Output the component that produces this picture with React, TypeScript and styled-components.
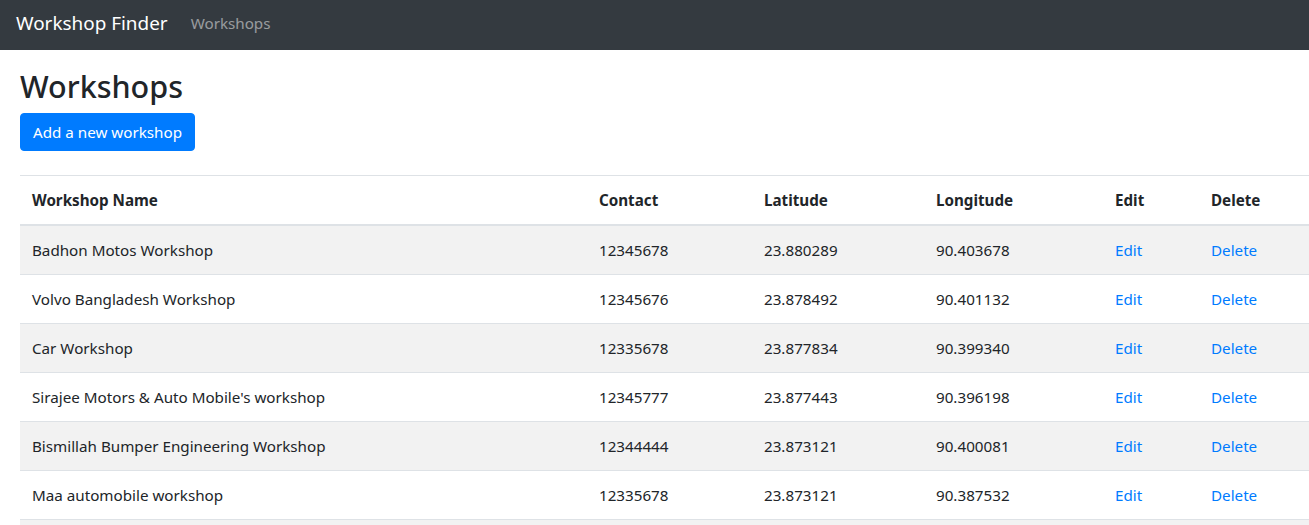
import styled, { createGlobalStyle } from "styled-components";

const GlobalStyle = createGlobalStyle`
  html, body {
    margin: 0;
    overflow: hidden;
  }
  body {
    font-family: "Segoe UI", "Noto Sans", "Open Sans", sans-serif;
    font-size: 15.2px;
    line-height: 24px;
    color: #212529;
    background: #fff;
  }
  * {
    box-sizing: border-box;
  }
`;

const Navbar = styled.nav`
  display: flex;
  align-items: center;
  height: 50px;
  padding: 0 16px 4px;
  background-color: #343a40;
`;
const Brand = styled.a`
  font-size: 18.9px;
  line-height: 30px;
  color: #fff;
  margin-right: 15px;
  text-decoration: none;
`;
const NavLink = styled.a`
  padding: 0 8px;
  font-size: 15.2px;
  color: rgba(255, 255, 255, 0.5);
  text-decoration: none;
`;
const Container = styled.main`
  padding: 17px 20px 0;
`;
const Title = styled.h2`
  margin: 0 0 8px;
  font-size: 30.5px;
  font-weight: 500;
  line-height: 38px;
`;
const Button = styled.button`
  display: inline-block;
  padding: 6px 12px;
  font-family: inherit;
  font-size: 15.2px;
  line-height: 24px;
  color: #fff;
  background-color: #007bff;
  border: 1px solid #007bff;
  border-radius: 4px;
`;
const Table = styled.table`
  width: 1320px;
  margin-top: 24px;
  border-collapse: collapse;
  table-layout: fixed;
`;
const Th = styled.th<{ $w: number }>`
  width: ${(p) => p.$w}px;
  padding: 12px;
  text-align: left;
  font-weight: 700;
  vertical-align: bottom;
  border-top: 1px solid #dee2e6;
  border-bottom: 2px solid #dee2e6;
`;
const Row = styled.tr`
  &:nth-of-type(odd) {
    background-color: rgba(0, 0, 0, 0.05);
  }
`;
const Td = styled.td`
  height: 49px;
  padding: 12px;
  border-top: 1px solid #dee2e6;
  vertical-align: top;
  white-space: nowrap;
`;
const ActionLink = styled.a`
  color: #007bff;
  text-decoration: none;
`;

interface IWorkshop {
  name: string;
  contact: string;
  lat: string;
  lng: string;
}

const workshops: IWorkshop[] = [
  { name: "Badhon Motos Workshop", contact: "12345678", lat: "23.880289", lng: "90.403678" },
  { name: "Volvo Bangladesh Workshop", contact: "12345676", lat: "23.878492", lng: "90.401132" },
  { name: "Car Workshop", contact: "12335678", lat: "23.877834", lng: "90.399340" },
  { name: "Sirajee Motors & Auto Mobile's workshop", contact: "12345777", lat: "23.877443", lng: "90.396198" },
  { name: "Bismillah Bumper Engineering Workshop", contact: "12344444", lat: "23.873121", lng: "90.400081" },
  { name: "Maa automobile workshop", contact: "12335678", lat: "23.873121", lng: "90.387532" },
];

function App() {
  return (
    <>
      <GlobalStyle />
      <Navbar>
        <Brand href="#">Workshop Finder</Brand>
        <NavLink href="#">Workshops</NavLink>
      </Navbar>
      <Container>
        <Title>Workshops</Title>
        <Button>Add a new workshop</Button>
        <Table>
          <thead>
            <tr>
              <Th $w={567}>Workshop Name</Th>
              <Th $w={165}>Contact</Th>
              <Th $w={172}>Latitude</Th>
              <Th $w={179}>Longitude</Th>
              <Th $w={96}>Edit</Th>
              <Th $w={141}>Delete</Th>
            </tr>
          </thead>
          <tbody>
            {workshops.map((w, i) => (
              <Row key={i}>
                <Td>{w.name}</Td>
                <Td>{w.contact}</Td>
                <Td>{w.lat}</Td>
                <Td>{w.lng}</Td>
                <Td>
                  <ActionLink href="#">Edit</ActionLink>
                </Td>
                <Td>
                  <ActionLink href="#">Delete</ActionLink>
                </Td>
              </Row>
            ))}
            {/* next row, below the fold */}
            <Row>
              <Td />
              <Td />
              <Td />
              <Td />
              <Td />
              <Td />
            </Row>
          </tbody>
        </Table>
      </Container>
    </>
  );
}

export default App;
